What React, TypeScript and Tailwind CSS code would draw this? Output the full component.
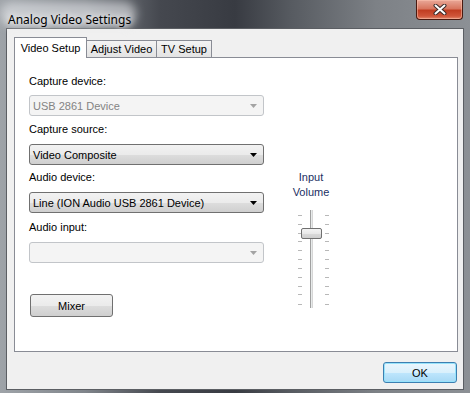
import React from "react";

const ui = "font-['Liberation_Sans',Arial,sans-serif] text-[11px] text-black";

function Combo({ value, disabled }: { value?: string; disabled?: boolean }) {
  return (
    <div
      className={
        "flex h-[21px] w-[235px] items-center justify-between rounded-[3px] border pl-[3px] pr-[6px] " +
        (disabled
          ? "border-[#c2c5c9] bg-[#f4f4f4] text-[#838383]"
          : "border-[#707070] bg-[linear-gradient(#f2f2f2_0%,#ebebeb_50%,#dddddd_51%,#cfcfcf_100%)] text-black")
      }
    >
      <span className="leading-[14px]">{value}</span>
      <svg width="7" height="4" viewBox="0 0 7 4">
        <path d="M0 0h7L3.5 4z" fill={disabled ? "#a3a3a3" : "#000"} />
      </svg>
    </div>
  );
}

function Label({ children }: { children: React.ReactNode }) {
  return <div className="h-[14px] leading-[14px]">{children}</div>;
}

function Slider() {
  const ticks = [5, 14, 23, 31, 40, 49, 58, 67, 76, 84, 94];
  return (
    <svg width="60" height="98" viewBox="0 0 60 98">
      <defs>
        <linearGradient id="thumb" x1="0" y1="0" x2="0" y2="1">
          <stop offset="0" stopColor="#f4f4f4" />
          <stop offset="0.5" stopColor="#e8e8e8" />
          <stop offset="0.55" stopColor="#d9d9d9" />
          <stop offset="1" stopColor="#cdcdcd" />
        </linearGradient>
      </defs>
      <rect x="29" y="0" width="3" height="98" fill="#e7eaea" />
      <rect x="29" y="0" width="1" height="98" fill="#a0a0a0" />
      <rect x="31" y="0" width="1" height="98" fill="#d6d6d6" />
      {ticks.map((y) => (
        <g key={y} fill="#b8b8b8">
          <rect x="17" y={y} width="4" height="1" />
          <rect x="44" y={y} width="4" height="1" />
        </g>
      ))}
      <rect x="20.5" y="18.5" width="20" height="10" rx="1.5" fill="url(#thumb)" stroke="#707070" />
    </svg>
  );
}

export default function App() {
  return (
    <div className="flex h-[393px] w-[470px] flex-col overflow-hidden bg-[linear-gradient(to_right,#9ea3a8_0%,#80858b_18%,#45484f_34%,#383b42_50%,#575b61_62%,#7d8186_80%,#8c9095_100%)]">
      <div className="flex h-[28px] shrink-0 items-start justify-between">
        <div className="relative pl-[8px] pt-[6px]">
          <div className="absolute left-0 top-[2px] h-[24px] w-[136px] rounded-[12px] bg-[#e7e9ec]/60 blur-[5px]" />
          <span className="relative font-['Noto_Sans',sans-serif] text-[12px] leading-[16px] text-[#000] [text-shadow:0_0_6px_#fff,0_0_10px_#fff]">
            Analog Video Settings
          </span>
        </div>
        <div className="mr-[7px] flex h-[20px] w-[47px] items-center justify-center rounded-b-[4px] border border-t-0 border-[#4a1a10] bg-[linear-gradient(#e9a898_0%,#d8765f_45%,#c13e22_55%,#d0563a_85%,#e28a6e_100%)] shadow-[inset_0_0_0_1px_rgba(255,200,180,0.5)]">
          <svg width="14" height="11" viewBox="0 0 14 11">
            <path d="M2.5 1.5l9 8M11.5 1.5l-9 8" stroke="#3a2a28" strokeWidth="4" strokeLinecap="round" />
            <path d="M2.5 1.5l9 8M11.5 1.5l-9 8" stroke="#fff" strokeWidth="2" strokeLinecap="round" />
          </svg>
        </div>
      </div>

      <div className={"mx-[6px] mb-[3px] flex flex-1 flex-col border border-[#5b5e63] bg-[#f0f0f0] pl-[7px] pr-[5px] pt-[8px] " + ui}>
        <div className="flex h-[20px] items-end">
          <div className="relative z-10 -mb-px flex h-[21px] w-[73px] items-start justify-center border border-b-0 border-[#898c95] bg-white pt-[3px] leading-[14px]">
            Video Setup
          </div>
          <div className="flex h-[17px] w-[70px] items-start justify-center border border-b-0 border-l-0 border-[#898c95] bg-[linear-gradient(#f3f3f3,#e3e3e3)] pt-[1px] leading-[14px]">
            Adjust Video
          </div>
          <div className="flex h-[17px] w-[55px] items-start justify-center border border-b-0 border-l-0 border-[#898c95] bg-[linear-gradient(#f3f3f3,#e3e3e3)] pt-[1px] leading-[14px]">
            TV Setup
          </div>
        </div>

        <div className="flex h-[295px] border border-[#898c95] bg-white">
          <div className="ml-[14px] flex w-[235px] flex-col">
            <div className="mt-[16px]">
              <Label>Capture device:</Label>
            </div>
            <div className="mt-[7px]">
              <Combo value="USB 2861 Device" disabled />
            </div>
            <div className="mt-[6px]">
              <Label>Capture source:</Label>
            </div>
            <div className="mt-[8px]">
              <Combo value="Video Composite" />
            </div>
            <div className="mt-[5px]">
              <Label>Audio device:</Label>
            </div>
            <div className="mt-[8px]">
              <Combo value="Line (ION Audio USB 2861 Device)" />
            </div>
            <div className="mt-[7px]">
              <Label>Audio input:</Label>
            </div>
            <div className="mt-[8px]">
              <Combo disabled />
            </div>
            <button className="ml-px mt-[31px] flex h-[23px] w-[83px] items-center justify-center rounded-[3px] border border-[#707070] bg-[linear-gradient(#f2f2f2_0%,#ebebeb_50%,#dddddd_51%,#cfcfcf_100%)] leading-[14px]">
              Mixer
            </button>
          </div>
          <div className="ml-[17px] flex w-[60px] flex-col items-center">
            <div className="mt-[112px] text-center leading-[15px] text-[#1b2f63]">
              Input
              <br />
              Volume
            </div>
            <div className="mt-[10px]">
              <Slider />
            </div>
          </div>
        </div>

        <div className="flex justify-end pr-[1px] pt-[10px]">
          <button className="flex h-[21px] w-[74px] items-center justify-center rounded-[3px] border border-[#3c7fb1] bg-[linear-gradient(#eaf6fd_0%,#d9f0fc_50%,#bee6fd_51%,#a7d9f5_100%)] leading-[14px] shadow-[inset_0_0_0_1px_#97e3fb]">
            OK
          </button>
        </div>
      </div>
    </div>
  );
}
